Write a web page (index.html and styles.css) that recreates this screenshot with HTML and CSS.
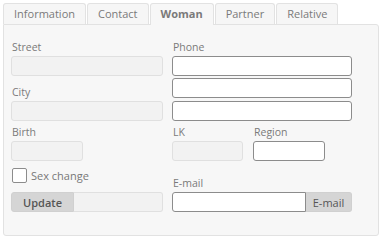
FILE: index.html
```html
<!DOCTYPE html>
<html lang="en">
<head>
  <meta charset="UTF-8">
  <title>Woman</title>
  <link rel="stylesheet" href="styles.css">
</head>
<body>
<div class="tabs">
  <div class="tab">Information</div>
  <div class="tab">Contact</div>
  <div class="tab ativo">Woman</div>
  <div class="tab">Partner</div>
  <div class="tab">Relative</div>
</div>
<div class="painel">
  <div class="form">
    <label class="rot">Street</label>
    <label class="rot">Phone</label>

    <input class="campo off" disabled>
    <input class="campo">

    <label class="rot">City</label>
    <input class="campo meio">

    <input class="campo off" disabled>
    <input class="campo">

    <label class="rot">Birth</label>
    <div class="duplo">
      <label class="rot">LK</label>
      <label class="rot">Region</label>
    </div>

    <input class="campo off curto" disabled>
    <div class="duplo">
      <input class="campo off" disabled>
      <input class="campo">
    </div>

    <div class="check"><span class="caixa"></span>Sex change</div>
    <label class="rot">E-mail</label>

    <div class="grupo"><span class="botao">Update</span><span class="resto"></span></div>
    <div class="grupo mail"><input class="campo"><span class="botao">E-mail</span></div>
  </div>
</div>
</body>
</html>
```

FILE: styles.css
```css
body { margin: 0; padding: 3px; font-family: "Open Sans", "Liberation Sans", sans-serif; color: #777; background: #fff; }
.tabs { display: flex; gap: 1px; height: 21px; }
.tab { box-sizing: border-box; height: 21px; padding: 0 10px; font-size: 11px; line-height: 20px; border: 1px solid #e2e2e2; border-bottom: none; border-radius: 3px 3px 0 0; background: #f6f6f6; color: #7a7a7a; }
.ativo { font-weight: bold; background: #f7f7f7; height: 22px; position: relative; z-index: 1; }
.painel { box-sizing: border-box; width: 376px; height: 212px; border: 1px solid #e2e2e2; border-radius: 0 3px 3px 3px; background: #f7f7f7; padding: 14px 7px 0 7px; }
.form { display: grid; grid-template-columns: 152px 180px; column-gap: 9px; grid-template-rows: 17px 20px 25px 20px 20px 20px 31px 20px; }
.rot { font-size: 10.5px; line-height: 14px; align-self: end; margin-bottom: 2px; padding-left: 1px; color: #7a7a7a; }
.campo { box-sizing: border-box; width: 100%; height: 20px; margin: 0; border: 1px solid #8c8c8c; border-radius: 3px; background: #fff; font: inherit; }
.off { border-color: #e0e0e0; background: #f2f2f2; }
.meio { margin-top: 2px; }
.curto { width: 72px; }
.duplo { display: grid; grid-template-columns: 71px 72px; column-gap: 10px; }
.duplo .rot { align-self: end; }
.check { display: flex; align-items: center; gap: 4px; align-self: start; margin-top: 7px; padding-left: 1px; font-size: 11px; }
.caixa { box-sizing: border-box; width: 15px; height: 15px; border: 1px solid #8c8c8c; border-radius: 2px; background: #fff; }
.grupo { display: flex; height: 20px; box-sizing: border-box; border-radius: 3px; }
.grupo .botao { box-sizing: border-box; display: flex; align-items: center; justify-content: center; width: 63px; height: 20px; background: #d5d5d5; border: 1px solid #d0d0d0; border-radius: 3px 0 0 3px; color: #555; font-size: 11px; font-weight: 600; }
.grupo .resto { flex: 1; border: 1px solid #e0e0e0; border-left: none; border-radius: 0 3px 3px 0; background: #f2f2f2; }
.mail .campo { flex: 1; border-radius: 3px 0 0 3px; }
.mail .botao { width: 46px; border-radius: 0 3px 3px 0; border-left: none; font-weight: normal; }
```
